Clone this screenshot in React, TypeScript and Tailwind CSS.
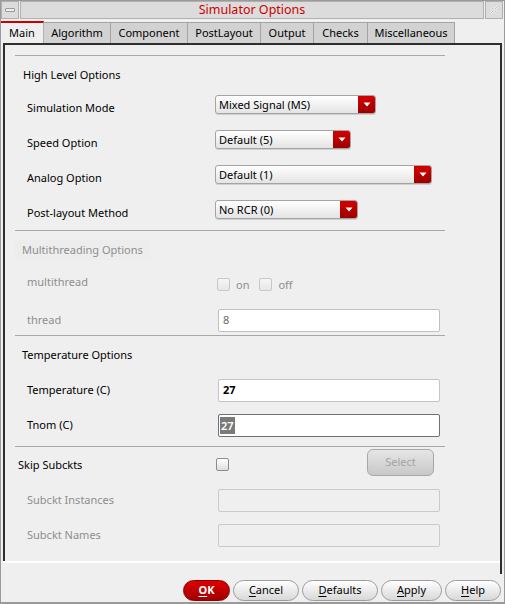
import React from "react";

const F = "font-['Noto_Sans','DejaVu_Sans',sans-serif]";

function Combo({ w, text }: { w: number; text: string }) {
  return (
    <div
      className="flex h-[19px] rounded-[3px] border border-[#a4a4a4] bg-linear-to-b from-white to-[#e4e4e4] shadow-[0_1px_0_#d0d0d0]"
      style={{ width: w }}
    >
      <div className="flex-1 pl-[3px] text-[11px] leading-[17px] text-black">{text}</div>
      <div className="flex w-[17px] items-center justify-center rounded-r-[2px] bg-linear-to-b from-[#d60000] to-[#9c0000]">
        <svg width="8" height="5" viewBox="0 0 8 5">
          <path d="M0.5 0.5 L7.5 0.5 L4 4.5 Z" fill="#ffffff" />
        </svg>
      </div>
    </div>
  );
}

function Check({ disabled }: { disabled?: boolean }) {
  return (
    <div
      className={
        disabled
          ? "h-[13px] w-[13px] rounded-[2px] border border-[#c8c8c8] bg-linear-to-b from-[#f6f6f6] to-[#e6e6e6]"
          : "h-[13px] w-[13px] rounded-[2px] border border-[#8c8c8c] bg-linear-to-b from-white to-[#dedede]"
      }
    />
  );
}

function Sep() {
  return <div className="ml-[10px] h-[1px] w-[430px] bg-[#a8a8a8]" />;
}

function Btn({ w, first, rest, ok }: { w: number; first: string; rest: string; ok?: boolean }) {
  return (
    <div
      className={
        ok
          ? "flex h-[21px] items-center justify-center rounded-full border border-[#8a0000] bg-linear-to-b from-[#e00000] to-[#a00000] text-[11px] font-bold text-white"
          : "flex h-[21px] items-center justify-center rounded-full border border-[#9c9c9c] bg-linear-to-b from-white to-[#d8d8d8] text-[11px] text-black"
      }
      style={{ width: w }}
    >
      <span className="underline underline-offset-2">{first}</span>
      <span>{rest}</span>
    </div>
  );
}

const tabs: [string, number][] = [
  ["Algorithm", 67],
  ["Component", 77],
  ["PostLayout", 73],
  ["Output", 53],
  ["Checks", 54],
  ["Miscellaneous", 87],
];

export default function App() {
  const label = "pl-[22px] text-[11px] leading-[14px] text-black";
  const glabel = "pl-[22px] text-[11px] leading-[14px] text-[#8e8e8e]";
  return (
    <div
      className={`${F} flex h-[604px] w-[505px] flex-col border border-b-2 border-[#9a9a9a] bg-[#efefef]`}
    >
      {/* title bar */}
      <div className="flex h-[18px] gap-[1px] pr-[1px]">
        <div className="flex w-[18px] items-center justify-center border border-[#b0b0b0] bg-[#dcdcdc]">
          <div className="h-[4px] w-[10px] rounded-[1px] border border-[#9a9a9a] bg-[#eeeeee]" />
        </div>
        <div className="flex flex-1 items-center justify-center border border-[#b0b0b0] bg-[#dcdcdc] text-[12.5px] leading-[16px] text-[#cc0000]">
          Simulator Options
        </div>
        <div className="flex w-[18px] items-center justify-center border border-[#b0b0b0] bg-[#dcdcdc]">
          <svg width="12" height="12" viewBox="0 0 12 12">
            <path d="M2 2 L5 5 M10 2 L7 5 M2 10 L5 7 M10 10 L7 7" stroke="#ffffff" strokeWidth="1.6" />
            <path d="M2 2 L5 5 M10 2 L7 5 M2 10 L5 7 M10 10 L7 7" stroke="#a8a8a8" strokeWidth="0.7" />
          </svg>
        </div>
      </div>

      {/* tabs */}
      <div className="mt-[2px] flex h-[22px] items-end">
        <div className="flex h-[22px] w-[43px] items-center justify-center border-t-2 border-r border-[#b0b0b0] border-t-[#cc0000] bg-[#efefef] text-[11px] text-black">
          Main
        </div>
        {tabs.map(([t, w]) => (
          <div
            key={t}
            className="flex h-[21px] items-center justify-center border-t border-r border-[#a4a4a4] bg-[#d2d2d2] text-[11px] text-black"
            style={{ width: w }}
          >
            {t}
          </div>
        ))}
      </div>

      {/* panel */}
      <div className="ml-[2px] flex h-[531px] w-[499px] flex-col border-t-2 border-r-2 border-[#2e2e2e]">
        <div className="flex h-[516px] flex-col border-l-2 border-[#2e2e2e] pt-[10px]">
          <Sep />
          <div className="flex h-[38px] items-center pl-[18px] text-[11px] text-black">High Level Options</div>

          <div className="flex h-[35px] items-start">
            <div className={`w-[210px] mt-[7px] ${label}`}>Simulation Mode</div>
            <div className="mt-[1px]"><Combo w={161} text="Mixed Signal (MS)" /></div>
          </div>
          <div className="flex h-[35px] items-start">
            <div className={`w-[210px] mt-[7px] ${label}`}>Speed Option</div>
            <div className="mt-[1px]"><Combo w={136} text="Default (5)" /></div>
          </div>
          <div className="flex h-[35px] items-start">
            <div className={`w-[210px] mt-[7px] ${label}`}>Analog Option</div>
            <div className="mt-[1px]"><Combo w={217} text="Default (1)" /></div>
          </div>
          <div className="flex h-[31px] items-start">
            <div className={`w-[210px] mt-[7px] ${label}`}>Post-layout Method</div>
            <div className="mt-[1px]"><Combo w={143} text="No RCR (0)" /></div>
          </div>

          <Sep />
          <div className="flex h-[38px] items-center pl-[10px]">
            <div className="flex h-[20px] items-center bg-[#ededed] pl-[7px] pr-[8px] text-[11px] text-[#8e8e8e]">
              Multithreading Options
            </div>
          </div>
          <div className="flex h-[36px] items-start">
            <div className={`w-[212px] mt-[6px] ${glabel}`}>multithread</div>
            <div className="mt-[9px] flex items-center text-[11px] leading-[13px] text-[#8e8e8e]">
              <Check disabled />
              <span className="ml-[6px] mr-[10px]">on</span>
              <Check disabled />
              <span className="ml-[6px]">off</span>
            </div>
          </div>
          <div className="flex h-[30px] items-start">
            <div className={`w-[213px] mt-[8px] ${glabel}`}>thread</div>
            <div className="mt-[4px] flex h-[23px] w-[222px] items-center rounded-[2px] border border-[#c0c0c0] bg-white pl-[4px] text-[11px] text-[#6a6a6a]">
              8
            </div>
          </div>

          <Sep />
          <div className="flex h-[38px] items-center pl-[17px] text-[11px] text-black">Temperature Options</div>
          <div className="flex h-[35px] items-start">
            <div className={`w-[213px] mt-[9px] ${label}`}>Temperature (C)</div>
            <div className="mt-[5px] flex h-[23px] w-[222px] items-center rounded-[2px] border border-[#c4c4c4] bg-white pl-[4px] text-[11px] font-bold text-black">
              27
            </div>
          </div>
          <div className="flex h-[37px] items-start">
            <div className={`w-[213px] mt-[9px] ${label}`}>Tnom (C)</div>
            <div className="mt-[5px] flex h-[23px] w-[222px] items-center rounded-[2px] border border-[#707070] bg-white pl-[1px] text-[11px]">
              <span className="bg-[#7a7a7a] px-[1px] leading-[17px] font-semibold text-white">27</span>
            </div>
          </div>

          <Sep />
          <div className="flex h-[42px] items-start">
            <div className="mt-[11px] w-[211px] pl-[13px] text-[11px] leading-[14px] text-black">Skip Subckts</div>
            <div className="mt-[11px]"><Check /></div>
            <div className="ml-[138px] mt-[2px] flex h-[27px] w-[67px] items-center justify-center rounded-[6px] border border-[#a8a8a8] bg-linear-to-b from-[#e6e6e6] to-[#c8c8c8] text-[11px] text-[#a4a4a4]">
              Select
            </div>
          </div>
          <div className="flex h-[35px] items-start">
            <div className={`w-[213px] mt-[4px] ${glabel}`}>Subckt Instances</div>
            <div className="h-[23px] w-[222px] rounded-[2px] border border-[#cacaca] bg-[#efefef]" />
          </div>
          <div className="flex h-[37px] items-start">
            <div className={`w-[213px] mt-[4px] ${glabel}`}>Subckt Names</div>
            <div className="h-[23px] w-[222px] rounded-[2px] border border-[#cacaca] bg-[#efefef]" />
          </div>
        </div>
        <div className="h-[2px] bg-white" />
      </div>

      {/* buttons */}
      <div className="mt-[6px] flex h-[21px] gap-[3px] pl-[182px]">
        <Btn w={47} first="O" rest="K" ok />
        <Btn w={66} first="C" rest="ancel" />
        <Btn w={76} first="D" rest="efaults" />
        <Btn w={61} first="A" rest="pply" />
        <Btn w={56} first="H" rest="elp" />
      </div>
    </div>
  );
}
